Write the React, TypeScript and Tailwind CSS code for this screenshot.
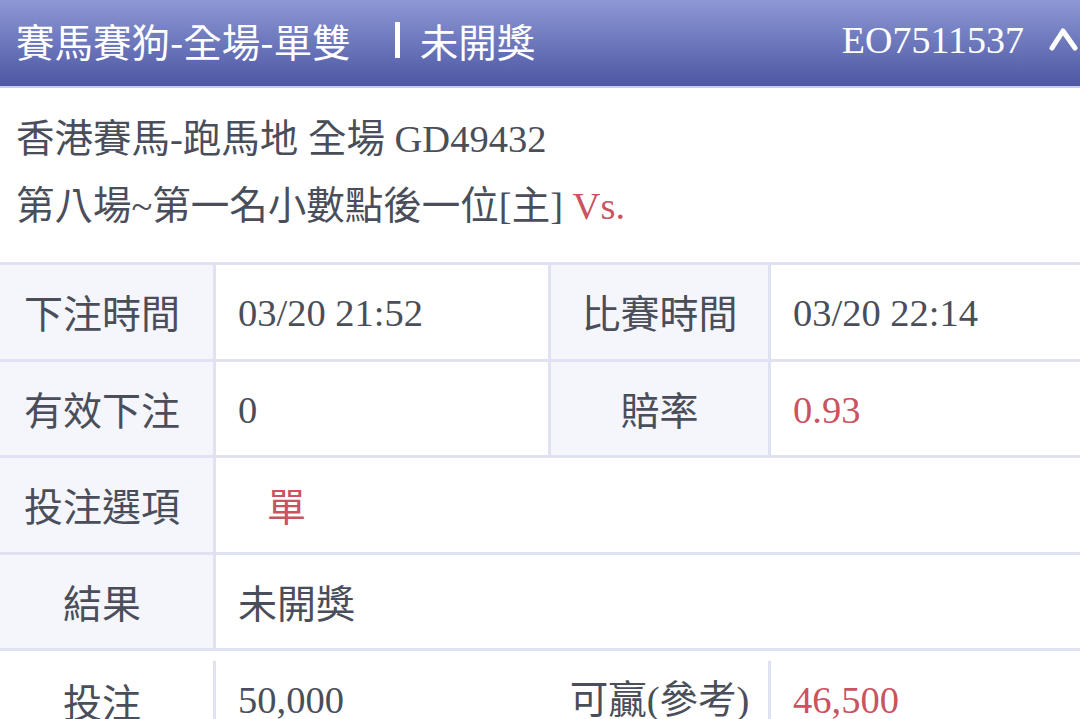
import React from "react";

const body = "font-['Liberation_Serif','Noto_Sans_CJK_TC',serif]";
const cjk = "font-['Noto_Sans_CJK_TC','Noto_Sans',sans-serif]";

function Label({ children, w, extra = "" }: { children: React.ReactNode; w: string; extra?: string }) {
  return (
    <div
      className={`${w} shrink-0 h-full flex items-center justify-center bg-[#f5f6fb] border-r-[3px] border-[#e0e2f1] text-[39px] ${cjk} ${extra}`}
    >
      {children}
    </div>
  );
}

export default function App() {
  return (
    <div className="w-[1080px] h-[719px] overflow-hidden bg-white text-[#4a4e5a] text-[38.5px] leading-none">
      {/* Header */}
      <div className="h-[88px] border-b-2 border-[#c9cde9] bg-gradient-to-b from-[#8e98d5] to-[#4d57a3] flex items-center pl-[16px] pb-[6px] text-white">
        <span className={`${cjk} text-[38.5px]`}>賽馬賽狗-全場-單雙</span>
        <div className="ml-[44px] w-[5px] h-[36px] bg-white" />
        <span className={`${cjk} text-[38.5px] ml-[20px]`}>未開獎</span>
        <div className="flex-1" />
        <span className="font-['Liberation_Serif',serif] text-[38px]">EO7511537</span>
        <svg className="ml-[24px]" width="32" height="26" viewBox="0 0 32 26" fill="none">
          <polyline points="4,21 15,4 27,21" stroke="white" strokeWidth="5" strokeLinecap="round" strokeLinejoin="round" />
        </svg>
      </div>

      {/* Match info */}
      <div className={`${body} pl-[16px] pt-[18px] pb-[22px]`}>
        <div className="h-[67px] flex items-center whitespace-pre">香港賽馬-跑馬地 全場 GD49432</div>
        <div className="h-[67px] flex items-center whitespace-pre">
          第八場~第一名小數點後一位[主] <span className="text-[#c9535f]">Vs.</span>
        </div>
      </div>

      {/* Table */}
      <div className="border-t-[3px] border-[#e0e2f1]">
        <div className="h-[93.5px] flex">
          <Label w="w-[216px]" extra="pr-[9px]">下注時間</Label>
          <div className={`w-[335px] shrink-0 border-r-[3px] border-[#e0e2f1] flex items-center pl-[22px] pt-[3px] ${body}`}>03/20 21:52</div>
          <Label w="w-[220px]">比賽時間</Label>
          <div className={`flex-1 flex items-center pl-[22px] pt-[3px] ${body}`}>03/20 22:14</div>
        </div>
      </div>
      <div className="border-t-[3px] border-[#e0e2f1]">
        <div className="h-[93.5px] flex">
          <Label w="w-[216px]" extra="pr-[9px]">有效下注</Label>
          <div className={`w-[335px] shrink-0 border-r-[3px] border-[#e0e2f1] flex items-center pl-[22px] pt-[3px] ${body}`}>0</div>
          <Label w="w-[220px]">賠率</Label>
          <div className={`flex-1 flex items-center pl-[22px] pt-[3px] text-[#c9535f] ${body}`}>0.93</div>
        </div>
      </div>
      <div className="border-t-[3px] border-[#e0e2f1]">
        <div className="h-[93.5px] flex">
          <Label w="w-[216px]" extra="pr-[9px]">投注選項</Label>
          <div className={`flex-1 flex items-center pl-[51px] text-[39px] text-[#c9535f] ${cjk}`}>單</div>
        </div>
      </div>
      <div className="border-t-[3px] border-[#e0e2f1]">
        <div className="h-[93.5px] flex">
          <Label w="w-[216px]" extra="pr-[9px]">結果</Label>
          <div className={`flex-1 flex items-center pl-[22px] text-[39px] ${cjk}`}>未開獎</div>
        </div>
      </div>
      <div className="border-t-[3px] border-[#e0e2f1] pt-[10px]">
        <div className="h-[78px] flex">
          <div className={`w-[216px] shrink-0 border-r-[3px] border-[#e0e2f1] flex items-center justify-center pr-[9px] text-[39px] ${cjk}`}>投注</div>
          <div className={`w-[335px] shrink-0 flex items-center pl-[22px] ${body}`}>50,000</div>
          <div className={`w-[220px] shrink-0 border-r-[3px] border-[#e0e2f1] flex items-center justify-center ${body}`}>可贏(參考)</div>
          <div className={`flex-1 flex items-center pl-[22px] text-[#c9535f] ${body}`}>46,500</div>
        </div>
      </div>
    </div>
  );
}
